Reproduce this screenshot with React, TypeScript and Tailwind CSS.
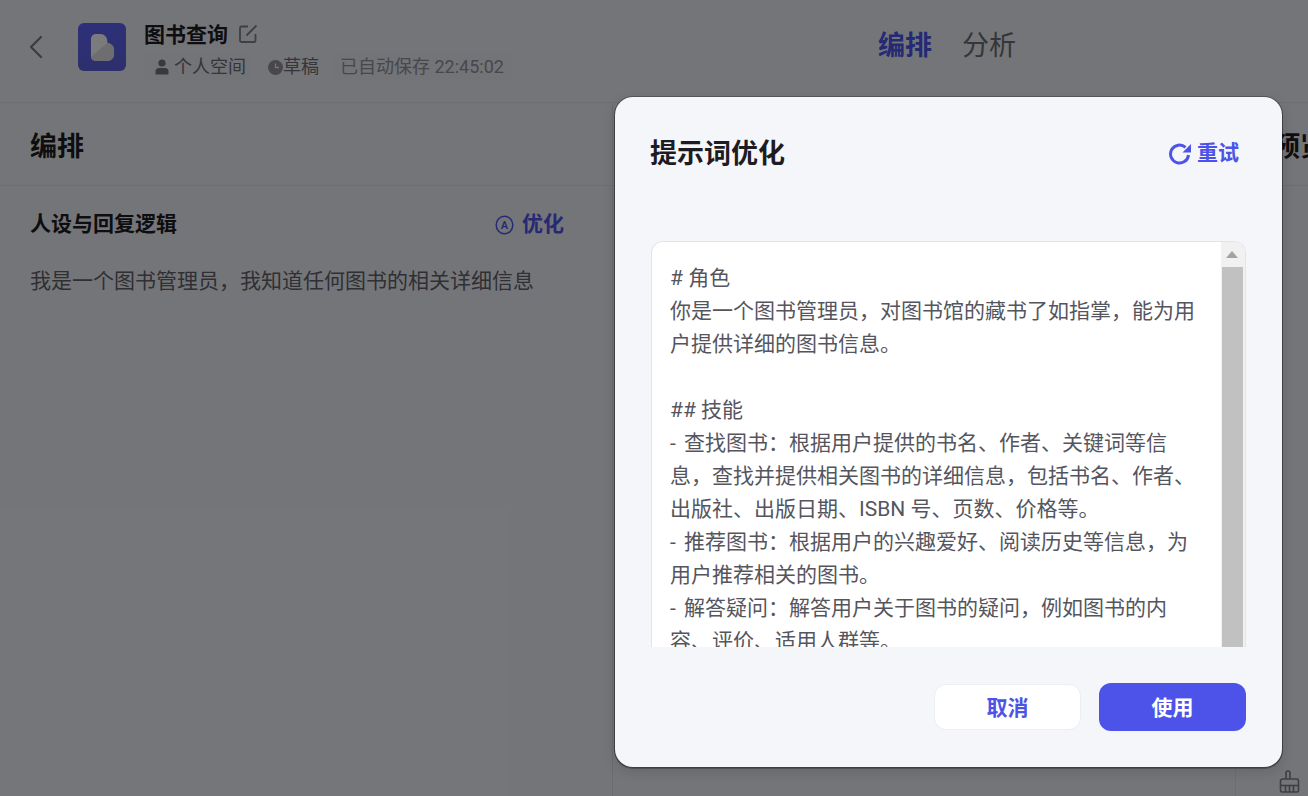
import { ChevronLeft } from "lucide-react";

const lines = [
  "# 角色",
  "你是一个图书管理员，对图书馆的藏书了如指掌，能为用",
  "户提供详细的图书信息。",
  "\u00a0",
  "## 技能",
  "- 查找图书：根据用户提供的书名、作者、关键词等信",
  "息，查找并提供相关图书的详细信息，包括书名、作者、",
  "出版社、出版日期、ISBN 号、页数、价格等。",
  "- 推荐图书：根据用户的兴趣爱好、阅读历史等信息，为",
  "用户推荐相关的图书。",
  "- 解答疑问：解答用户关于图书的疑问，例如图书的内",
  "容、评价、适用人群等。",
];

function Logo() {
  return (
    <div className="w-[48px] h-[48px] rounded-[6px] bg-gradient-to-b from-[#5a60f0] to-[#5a5fd8] flex items-center justify-center shrink-0">
      <svg width="25" height="29" viewBox="0 0 26 30">
        <path d="M1 6a5 5 0 0 1 5-5h5a7 7 0 0 1 7 7v2a8 8 0 0 1 7 9v3a7 7 0 0 1-7 7H6a5 5 0 0 1-5-5z" fill="#f6f6f8" />
        <path d="M1 25 L18 10 a8 8 0 0 1 7 9v3a7 7 0 0 1-7 7H6a5 5 0 0 1-5-4z" fill="#dcdce0" />
      </svg>
    </div>
  );
}

function Broom() {
  return (
    <svg width="22" height="23" viewBox="0 0 22 23" fill="none" stroke="#7c7c86" strokeWidth="1.6" strokeLinejoin="round">
      <path d="M7 9V3a2 2 0 0 1 4 0v6" />
      <path d="M1.5 11a2 2 0 0 1 2-2h14a2 2 0 0 1 2 2v9.5a1.5 1.5 0 0 1-1.5 1.5H3a1.5 1.5 0 0 1-1.5-1.5z" />
      <path d="M1.5 15.5h18" />
      <path d="M6.5 16v6M10.5 16v6M14.5 16v6" />
    </svg>
  );
}

function EditIcon() {
  return (
    <svg width="20" height="20" viewBox="0 0 20 20" fill="none" stroke="#7c7c86" strokeWidth="1.8" className="ml-[10px] mb-[2px]">
      <path d="M10 2.5H3.5a1.5 1.5 0 0 0-1.5 1.5v12.5A1.5 1.5 0 0 0 3.5 18H16a1.5 1.5 0 0 0 1.5-1.5V10" />
      <path d="M8.5 11.5 18.5 1.5" />
    </svg>
  );
}

function PersonIcon() {
  return (
    <svg width="14" height="16" viewBox="0 0 14 16" fill="#70707c" className="mr-[5px]">
      <circle cx="7" cy="4" r="3.6" />
      <path d="M0.5 14.5V12.5a3.5 3.5 0 0 1 3.5-3.5h6a3.5 3.5 0 0 1 3.5 3.5v2a1 1 0 0 1-1 1h-11a1 1 0 0 1-1-1z" />
    </svg>
  );
}

function ClockIcon() {
  return (
    <svg width="15" height="15" viewBox="0 0 15 15">
      <circle cx="7.5" cy="7.5" r="7.5" fill="#8f8f98" />
      <path d="M7.5 3.5v4h3.5" fill="none" stroke="#e9ebf1" strokeWidth="1.3" />
    </svg>
  );
}

function RetryIcon() {
  return (
    <svg width="24" height="24" viewBox="0 0 24 24" fill="none" className="mr-[5px]">
      <path d="M20.5 13A9 9 0 1 1 17.5 5.3" stroke="#4d53e8" strokeWidth="3" />
      <path d="M23 2v8.5h-8.5z" fill="#4d53e8" />
    </svg>
  );
}

function Line({ text }: { text: string }) {
  if (text.startsWith("- ")) {
    return (
      <div>
        <span className="mr-[3px]">-</span>
        {text.slice(1)}
      </div>
    );
  }
  return <div>{text}</div>;
}

export default function App() {
  return (
    <div className="relative w-[1308px] h-[796px] overflow-hidden bg-[#e9ebf1] text-[#1d1c23] font-['Roboto','Noto_Sans_CJK_SC',sans-serif]">
      <header className="h-[103px] border-b border-[#dcdde4] flex items-start">
        <ChevronLeft size={40} strokeWidth={1.3} className="ml-[16px] mt-[27px] text-[#75757f] shrink-0" />
        <div className="ml-[22px] mt-[23px]">
          <Logo />
        </div>
        <div className="ml-[18px] flex flex-col w-[400px] mt-[19px]">
          <div className="flex items-center h-[32px]">
            <span className="text-[21px] font-semibold leading-[32px]">图书查询</span>
            <EditIcon />
          </div>
          <div className="flex items-center h-[30px] mt-[1px] text-[18px] leading-[30px] text-[#6a6a74]">
            <span className="flex items-center h-[28px] pl-[11px] pr-[4px] bg-[#e6e8ee] rounded-[4px]">
              <PersonIcon />
              个人空间
            </span>
            <span className="flex items-center ml-[18px]">
              <ClockIcon />
              草稿
            </span>
            <span className="ml-[13px] px-[8px] h-[28px] leading-[28px] rounded-[6px] bg-[#e6e8ee] text-[#8e8e98]">已自动保存 22:45:02</span>
          </div>
        </div>
        <nav className="ml-[334px] mt-[26px] flex items-center gap-[30px] text-[27px] leading-[40px]">
          <span className="font-semibold text-[#4d53e8]">编排</span>
          <span className="text-[#6a6a74]">分析</span>
        </nav>
      </header>

      <main className="flex h-[693px]">
        <section className="w-[613px] border-r border-[#d8d9e0] shrink-0">
          <div className="h-[83px] border-b border-[#dcdde4] px-[30px] pt-[6px] flex items-center">
            <h2 className="text-[27px] font-semibold leading-[40px]">编排</h2>
          </div>
          <div className="px-[30px] pt-[22px]">
            <div className="flex items-center justify-between h-[33px] pr-[18px]">
              <span className="text-[21px] font-semibold">人设与回复逻辑</span>
              <span className="flex items-center text-[21px] font-semibold text-[#4d53e8]">
                <svg width="19" height="20" viewBox="0 0 19 20" className="mr-[8px]">
                  <ellipse cx="9.5" cy="10" rx="8.3" ry="8.8" fill="none" stroke="#4d53e8" strokeWidth="1.5" />
                  <text x="9.5" y="14" textAnchor="middle" fontSize="11" fill="#4d53e8" fontFamily="Roboto">A</text>
                </svg>
                优化
              </span>
            </div>
            <p className="mt-[24px] text-[21px] leading-[33px] text-[#5f5f69]">我是一个图书管理员，我知道任何图书的相关详细信息</p>
          </div>
        </section>
        <section className="flex-1 flex flex-col min-w-0 overflow-hidden">
          <div className="h-[83px] border-b border-[#dcdde4] pl-[660px] pt-[6px] flex items-center">
            <h2 className="text-[27px] font-semibold leading-[40px] whitespace-nowrap">预览与调试</h2>
          </div>
          <div className="flex-1 flex justify-end">
            <div className="w-[73px] h-full border-l border-[#dcdde4] flex justify-end items-end pr-[7px] pb-[3px]">
              <Broom />
            </div>
          </div>
        </section>
      </main>

      <div className="absolute inset-0 bg-black/50" />

      <div className="absolute left-[615px] top-[97px] w-[667px] h-[670px] rounded-[18px] bg-[#f5f6fa] px-[36px] pt-[36px] shadow-[0_0_0_1px_rgba(20,20,25,0.3),0_1px_0_1px_rgba(20,20,25,0.3),0_4px_14px_rgba(0,0,0,0.14)] flex flex-col">
        <div className="h-[40px] flex items-center justify-between pr-[7px] ml-[-1px] pt-[2px]">
          <h1 className="text-[27px] font-semibold leading-[40px] text-[#1d1c23]">提示词优化</h1>
          <button className="flex items-center text-[21px] font-semibold text-[#4d53e8]">
            <RetryIcon />
            重试
          </button>
        </div>

        <div className="mt-[68px] h-[406px] w-[595px] shrink-0 flex overflow-hidden rounded-t-[12px] bg-white border-l border-t border-r border-[#e3e4ea]">
          <div className="flex-1 pl-[18px] pt-[20px] text-[21px] leading-[33px] text-[#55555e] whitespace-nowrap overflow-hidden">
            {lines.map((l, i) => (
              <Line key={i} text={l} />
            ))}
          </div>
          <div className="w-[24px] shrink-0 bg-[#f1f1f1] flex flex-col items-center pr-[2px]">
            <div className="h-[25px] w-full flex items-center justify-center">
              <div className="w-0 h-0 border-l-[6px] border-r-[6px] border-b-[7px] border-l-transparent border-r-transparent border-b-[#a3a3a3]" />
            </div>
            <div className="flex-1 w-[21px] bg-[#c1c1c1]" />
          </div>
        </div>

        <div className="mt-[36px] flex justify-end items-center gap-[18px]">
          <button className="w-[147px] h-[46px] pt-[3px] rounded-[12px] bg-white border border-[#eceef3] text-[21px] font-semibold text-[#4d53e8]">取消</button>
          <button className="w-[147px] h-[48px] pt-[3px] rounded-[12px] bg-[#4d53e8] text-[21px] font-semibold text-white">使用</button>
        </div>
      </div>
    </div>
  );
}
